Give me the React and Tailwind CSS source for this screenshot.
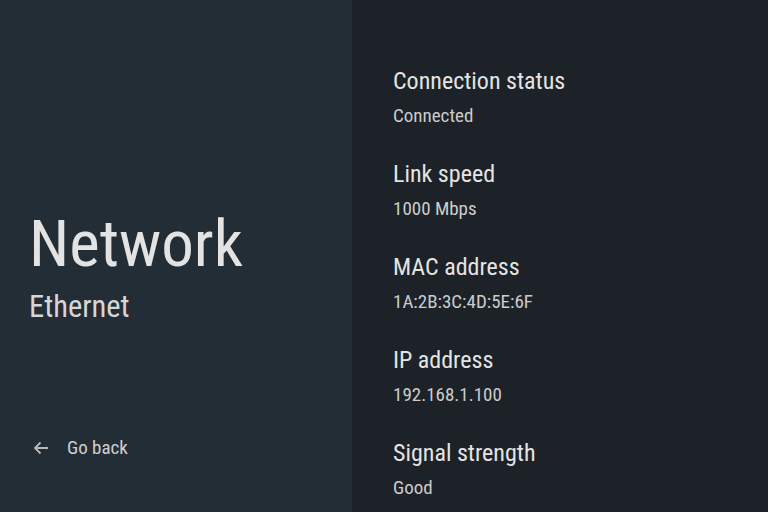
const rows = [
  { label: 'Connection status', value: 'Connected' },
  { label: 'Link speed', value: '1000 Mbps' },
  { label: 'MAC address', value: '1A:2B:3C:4D:5E:6F' },
  { label: 'IP address', value: '192.168.1.100' },
  { label: 'Signal strength', value: 'Good' },
];

export default function App() {
  return (
    <div className="flex h-[512px] w-[768px] overflow-hidden font-['Roboto_Condensed',Roboto,sans-serif]">
      {/* left side: page title */}
      <div className="flex w-[352px] shrink-0 flex-col bg-[#232d36] pl-[29px] pt-[212px]">
        <h1 className="text-[65px] leading-[64px] text-[#e3e3e3]">Network</h1>
        <div className="mt-[13px] text-[30.5px] leading-[36px] text-[#d6d6d6]">Ethernet</div>
        <button className="mt-[109px] flex items-center text-left">
          <svg className="ml-[4px] h-[16px] w-[16px]" viewBox="0 0 16 16" fill="none">
            <path d="M15 8H2M7.5 2.5L2 8l5.5 5.5" stroke="#b9b9b9" strokeWidth="1.8" />
          </svg>
          <span className="ml-[18px] text-[19px] leading-[28px] text-[#cfcfcf]">Go back</span>
        </button>
      </div>

      {/* right side: details list */}
      <div className="flex flex-1 flex-col gap-[30px] bg-[#1c2227] pl-[41px] pt-[65px]">
        {rows.map((row) => (
          <div key={row.label} className="flex flex-col gap-[7px]">
            <div className="text-[24px] leading-[32px] text-[#e4e4e4]">{row.label}</div>
            <div className="text-[19px] leading-[24px] text-[#cccccc]">{row.value}</div>
          </div>
        ))}
      </div>
    </div>
  );
}
